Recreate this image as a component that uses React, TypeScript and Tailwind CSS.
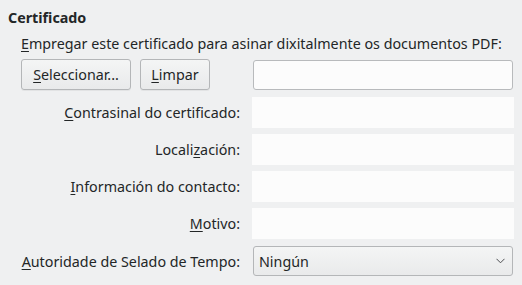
import { FunctionComponent } from "react";

const Label: FunctionComponent<{ k: string; rest: string }> = ({ k, rest }) => (
  <span>
    <u className="underline-offset-2">{k}</u>
    {rest}
  </span>
);

const fields = [
  { k: "C", rest: "ontrasinal do certificado:" },
  { k: "", rest: "" },
  { k: "I", rest: "nformación do contacto:" },
  { k: "M", rest: "otivo:" },
];

const App: FunctionComponent = () => {
  return (
    <div
      className="w-[522px] h-[285px] bg-[#eff0f1] text-[#232627] text-[14.3px] leading-[19px] overflow-hidden"
      style={{ fontFamily: '"Noto Sans", "DejaVu Sans", sans-serif' }}
    >
      <div className="pt-[8px] pl-[8px] font-bold">Certificado</div>
      <div className="pl-[21px] pr-[8px]">
        <div className="mt-[7px]">
          <Label k="E" rest="mpregar este certificado para asinar dixitalmente os documentos PDF:" />
        </div>
        <div className="mt-[6px] flex items-center">
          <button className="w-[110px] h-[31px] border border-[#b4b6b8] rounded-[3px] bg-gradient-to-b from-[#f4f5f5] to-[#e9eaeb] shadow-[0_1px_0_rgba(0,0,0,0.05)]">
            <Label k="S" rest="eleccionar..." />
          </button>
          <button className="ml-[9px] w-[70px] h-[31px] border border-[#b4b6b8] rounded-[3px] bg-gradient-to-b from-[#f4f5f5] to-[#e9eaeb] shadow-[0_1px_0_rgba(0,0,0,0.05)]">
            <Label k="L" rest="impar" />
          </button>
          <div className="ml-[43px] w-[260px] h-[30px] border border-[#b8babc] rounded-[3px] bg-[#fcfcfc]" />
        </div>
        <div className="mt-[7px] grid grid-cols-[219px_262px] gap-x-[12px] gap-y-[6px] items-center">
          {fields.map((f, i) => (
            <div key={i} className="contents">
              <div className="text-right">
                {i === 1 ? (
                  <span>
                    Locali<u className="underline-offset-2">z</u>ación:
                  </span>
                ) : (
                  <Label k={f.k} rest={f.rest} />
                )}
              </div>
              <div className="h-[31px] bg-[#fcfcfc]" />
            </div>
          ))}
          <div className="text-right mt-[1px]">
            <Label k="A" rest="utoridade de Selado de Tempo:" />
          </div>
          <div className="mt-[1px] mx-[1px] h-[30px] border border-[#b4b6b8] rounded-[3px] bg-gradient-to-b from-[#f4f5f5] to-[#e9eaeb] flex items-center justify-between pl-[5px] pr-[7px]">
            <span>Ningún</span>
            <svg width="9" height="6" viewBox="0 0 9 6" fill="none">
              <path d="M0.5 0.8 L4.5 4.8 L8.5 0.8" stroke="#4d4f51" strokeWidth="1" />
            </svg>
          </div>
        </div>
      </div>
    </div>
  );
};

export default App;
